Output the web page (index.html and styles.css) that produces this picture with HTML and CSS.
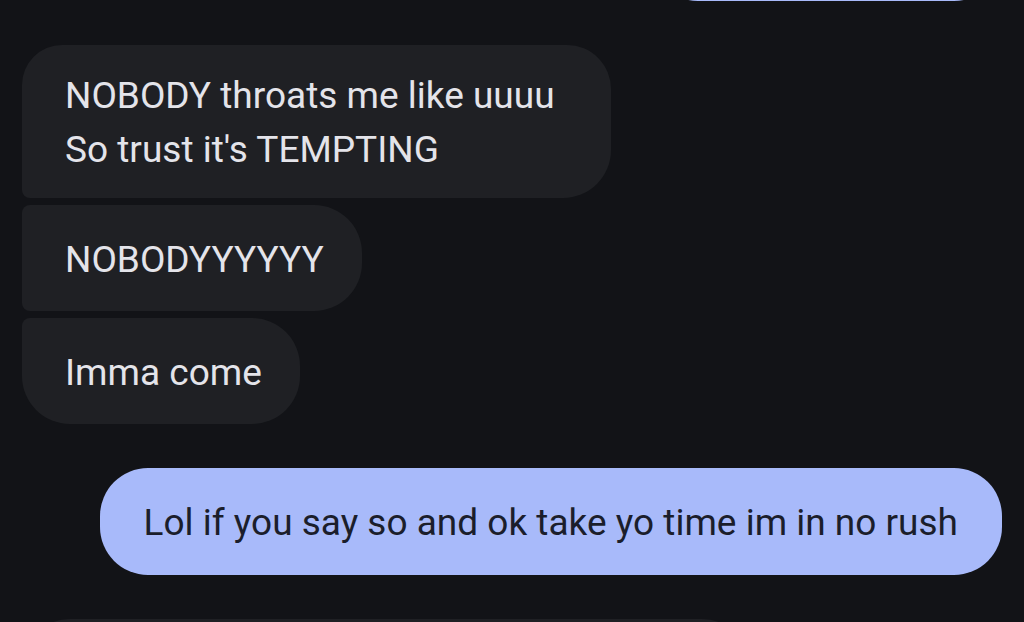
FILE: index.html
```html
<!DOCTYPE html>
<html lang="en">
<head>
  <meta charset="UTF-8" />
  <title>Messages</title>
  <meta name="viewport" content="width=device-width, initial-scale=1.0" />
  <link rel="stylesheet" href="styles.css">
</head>
<body>
  <div class="thread">
    <div class="bubble sent cut-top"></div>

    <div class="group">
      <div class="bubble received first wide">NOBODY throats me like uuuu<br>So trust it's TEMPTING</div>
      <div class="bubble received middle">NOBODYYYYYY</div>
      <div class="bubble received last">Imma come</div>
    </div>

    <div class="bubble sent">Lol if you say so and ok take yo time im in no rush</div>

    <div class="bubble received first cut-bottom"></div>
  </div>
</body>
</html>
```

FILE: styles.css
```css
html, body {
  margin: 0;
  height: 100%;
  overflow: hidden;
  background: #121317;
}

body {
  font-family: Roboto, "Noto Sans", sans-serif;
  font-size: 37px;
}

.thread {
  display: flex;
  flex-direction: column;
  gap: 44px;
  padding: 0 22px;
  margin-top: -106px;
}

.group {
  display: flex;
  flex-direction: column;
  align-items: flex-start;
  gap: 7px;
}

.bubble {
  box-sizing: border-box;
  min-height: 106px;
  padding: 24px 38px 21px 43px;
  line-height: 54px;
  border-radius: 48px;
  display: flex;
  align-items: center;
}

.received {
  background: #1f2024;
  color: #e4e4ea;
  align-self: flex-start;
}

.received.first {
  border-bottom-left-radius: 8px;
}

.received.middle {
  border-top-left-radius: 8px;
  border-bottom-left-radius: 8px;
}

.received.last {
  border-top-left-radius: 8px;
}

.received.wide {
  padding-right: 56px;
  border-top-left-radius: 40px;
  border-top-right-radius: 44px;
}

.sent {
  background: #a8bafa;
  color: #1b1e2b;
  align-self: flex-end;
  min-height: 107px;
  padding-left: 44px;
  padding-right: 44px;
}

.cut-top {
  width: 352px;
}

.cut-bottom {
  width: 728px;
}
```
